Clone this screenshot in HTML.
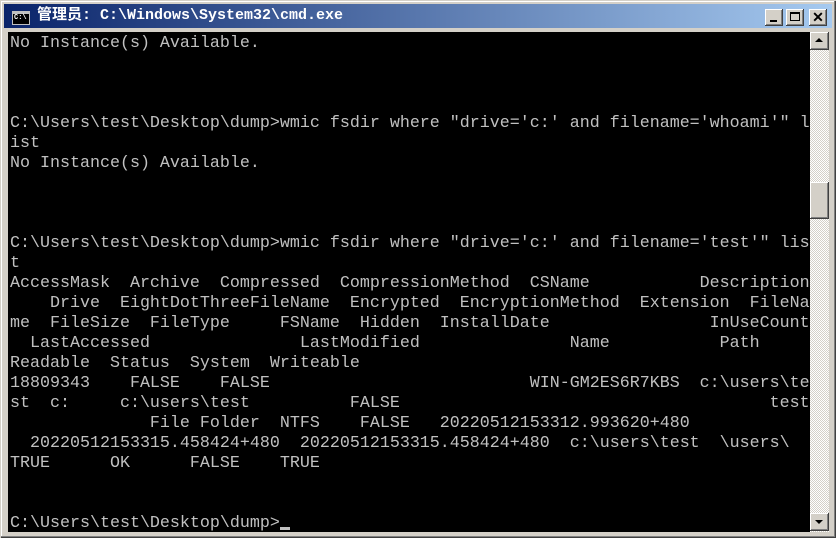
<!DOCTYPE html>
<html><head><meta charset="utf-8"><style>
*{margin:0;padding:0;box-sizing:border-box}
body{width:836px;height:538px;overflow:hidden;background:#d4d0c8;position:relative}
.frame{position:absolute;left:0;top:0;width:836px;height:538px;background:#d4d0c8;border-top:1px solid #d4d0c8;border-left:1px solid #d4d0c8;box-shadow:inset -1px -1px 0 #404040,inset -2px -2px 0 #808080,inset 1px 1px 0 #fff}
.title{position:absolute;left:4px;top:4px;width:828px;height:24px;background:linear-gradient(to right,#0a246a,#a6caf0)}
.ttext{position:absolute;left:33px;top:3px;color:#fff;font:bold 15px "Liberation Mono","Noto Sans CJK SC",monospace;white-space:pre;line-height:18px}
.icon{position:absolute;left:8px;top:7px;width:18px;height:14px;background:#000;border:1px solid #c0c0c0;border-top:3px solid #c0c0c0;color:#fff;font:bold 7px "Liberation Mono",monospace;line-height:9px;padding-left:1px}
.btn{position:absolute;top:9px;width:18px;height:17px;background:#d4d0c8;box-shadow:inset -1px -1px 0 #404040,inset 1px 1px 0 #fff,inset -2px -2px 0 #808080}
.con{position:absolute;left:8px;top:32px;width:802px;height:500px;background:#000}
pre{position:absolute;left:10px;top:34px;color:#c0c0c0;font:16.67px/20px "Liberation Mono",monospace}
.sb{position:absolute;left:810px;top:32px;width:19px;height:500px;background:repeating-conic-gradient(#fff 0 25%,#d4d0c8 0 50%) 0 0/2px 2px}
.sbb{position:absolute;left:0;width:19px;height:18px;background:#d4d0c8;box-shadow:inset -1px -1px 0 #404040,inset 1px 1px 0 #fff,inset -2px -2px 0 #808080}
</style></head><body>
<div class="frame"></div>
<div class="title">
<div class="icon">C:\</div>
<div class="ttext">管理员: C:\Windows\System32\cmd.exe</div>
</div>
<div class="btn" style="left:765px"><div style="position:absolute;left:5px;top:11px;width:7px;height:2px;background:#000"></div></div>
<div class="btn" style="left:786px"><div style="position:absolute;left:4px;top:3px;width:10px;height:9px;border:1px solid #000;border-top-width:2px"></div></div>
<div class="btn" style="left:809px"><div style="position:absolute;left:0;top:0;width:18px;height:16px;text-align:center;font:bold 14px/16px 'Liberation Sans',sans-serif">✕</div></div>
<div class="con"></div>
<pre>No Instance(s) Available.



C:\Users\test\Desktop\dump>wmic fsdir where "drive='c:' and filename='whoami'" l
ist
No Instance(s) Available.



C:\Users\test\Desktop\dump>wmic fsdir where "drive='c:' and filename='test'" lis
t
AccessMask  Archive  Compressed  CompressionMethod  CSName           Description
    Drive  EightDotThreeFileName  Encrypted  EncryptionMethod  Extension  FileNa
me  FileSize  FileType     FSName  Hidden  InstallDate                InUseCount
  LastAccessed               LastModified               Name           Path
Readable  Status  System  Writeable
18809343    FALSE    FALSE                          WIN-GM2ES6R7KBS  c:\users\te
st  c:     c:\users\test          FALSE                                     test
              File Folder  NTFS    FALSE   20220512153312.993620+480
  20220512153315.458424+480  20220512153315.458424+480  c:\users\test  \users\
TRUE      OK      FALSE    TRUE


C:\Users\test\Desktop\dump></pre>
<div style="position:absolute;left:280px;top:527px;width:10px;height:3px;background:#c0c0c0"></div>
<div class="sb">
<div class="sbb" style="top:0"><div style="position:absolute;left:5px;top:6px;border:4px solid transparent;border-bottom:4px solid #000;border-top:0"></div></div>
<div class="sbb" style="top:150px;height:37px"></div>
<div class="sbb" style="top:481px"><div style="position:absolute;left:5px;top:7px;border:4px solid transparent;border-top:4px solid #000;border-bottom:0"></div></div>
</div>
</body></html>
